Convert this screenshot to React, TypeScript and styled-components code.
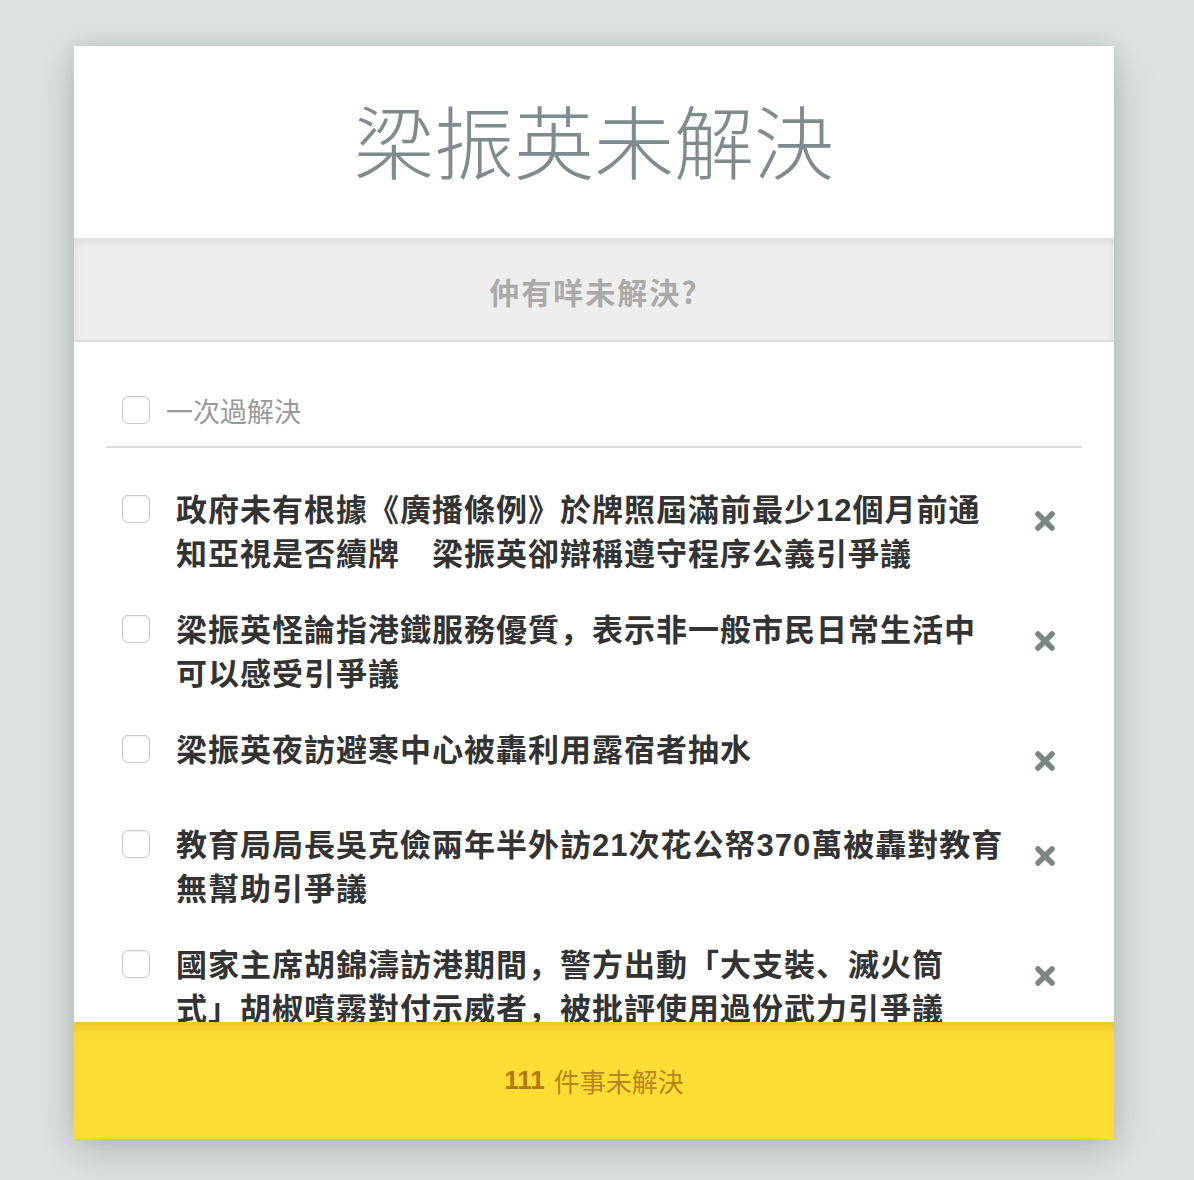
import { useState } from 'react'
import styled, { createGlobalStyle } from 'styled-components'

// 梁振英未解決 - a todo list of unresolved things, with a count in the yellow footer

const GlobalStyle = createGlobalStyle`
  html, body {
    margin: 0;
    padding: 0;
    background: #dee2e3;
    font-family: "Liberation Sans", "Noto Sans CJK SC", "Noto Sans CJK TC", sans-serif;
  }
`;

const Page = styled.div`
  padding: 46px 6px 0 0;
  height: 1180px;
  box-sizing: border-box;
`;

const Card = styled.section`
  width: 1040px;
  height: 1093px;
  margin: 0 auto;
  background: #fff;
  display: flex;
  flex-direction: column;
  box-shadow: 0 12px 40px rgba(0, 0, 0, 0.18), 0 0 18px rgba(0, 0, 0, 0.08);
  overflow: hidden;
`;

const Header = styled.header`
  height: 192px;
  box-sizing: border-box;
  padding-bottom: 8px;
  display: flex;
  align-items: center;
  justify-content: center;
  flex-shrink: 0;
`;

const Title = styled.h1`
  margin: 0;
  font-family: "Noto Sans CJK SC", "Noto Sans CJK TC", sans-serif;
  font-size: 80px;
  font-weight: 300;
  color: #7f8c8d;
  line-height: 1;
`;

const NewTodo = styled.input`
  flex-shrink: 0;
  height: 98px;
  padding: 4px 0 0;
  border: none;
  border-bottom: 2px solid #dcdcdc;
  background: #eee;
  box-shadow: inset 0 12px 12px -10px rgba(0, 0, 0, 0.09), inset -10px 0 12px -10px rgba(0, 0, 0, 0.06),
    inset 10px 0 12px -10px rgba(0, 0, 0, 0.06);
  text-align: center;
  font-family: "Noto Sans CJK SC", "Noto Sans CJK TC", sans-serif;
  font-size: 30px;
  font-weight: 700;
  letter-spacing: 2px;
  color: #555;
  outline: none;
  box-sizing: content-box;

  &::placeholder {
    color: #aaa;
  }
`;

const List = styled.div`
  flex: 1;
  overflow: hidden;
  padding: 32px 32px 0;
`;

const ToggleRow = styled.label`
  height: 72px;
  display: flex;
  align-items: center;
  gap: 16px;
  padding: 0 16px;
  border-bottom: 2px solid #ddd;
  margin-bottom: 25px;
  font-size: 27px;
  color: #999;
`;

const Check = styled.input.attrs({ type: 'checkbox' })`
  appearance: none;
  margin: 0;
  flex-shrink: 0;
  width: 28px;
  height: 28px;
  border: 1px solid #c6c6c6;
  border-radius: 6px;
  background: #fff;
  box-shadow: inset 0 1px 2px rgba(0, 0, 0, 0.06);
  box-sizing: border-box;
  cursor: pointer;

  &:checked {
    background: #7f8c8d;
    border-color: #7f8c8d;
  }
`;

const Items = styled.ul`
  list-style: none;
  margin: 0;
  padding: 0;
`;

const Item = styled.li`
  display: flex;
  align-items: flex-start;
  padding: 16px 16px;
`;

const ItemCheck = styled(Check)`
  margin-top: 6px;
  margin-right: 26px;
`;

const ItemText = styled.span<{ $done: boolean }>`
  width: 829px;
  font-size: 31px;
  font-weight: 700;
  letter-spacing: 1px;
  line-height: 44px;
  text-spacing-trim: space-all;
  color: ${p => (p.$done ? '#bbb' : '#333')};
  text-decoration: ${p => (p.$done ? 'line-through' : 'none')};
`;

const Destroy = styled.button`
  margin-left: auto;
  width: 42px;
  height: 63px;
  flex-shrink: 0;
  border: none;
  background: none;
  padding: 0;
  display: flex;
  align-items: center;
  justify-content: center;
  cursor: pointer;
`;

const Footer = styled.footer`
  flex-shrink: 0;
  height: 117px;
  background: #fddc34;
  box-shadow: inset 0 14px 14px -10px rgba(190, 130, 0, 0.35);
  display: flex;
  align-items: center;
  justify-content: center;
  font-size: 26px;
  color: #b8861a;
`;

const Count = styled.strong`
  font-weight: 700;
  color: #b07a0e;
  margin-right: 9px;
`;

const Cross = () => (
  <svg width="22" height="22" viewBox="0 0 22 22">
    <path d="M4 4 L18 18 M18 4 L4 18" stroke="#7a8586" strokeWidth="5.5" strokeLinecap="round" />
  </svg>
);

const initial = [
  '政府未有根據《廣播條例》於牌照屆滿前最少12個月前通知亞視是否續牌　梁振英卻辯稱遵守程序公義引爭議',
  '梁振英怪論指港鐵服務優質，表示非一般市民日常生活中可以感受引爭議',
  '梁振英夜訪避寒中心被轟利用露宿者抽水',
  '教育局局長吳克儉兩年半外訪21次花公帑370萬被轟對教育無幫助引爭議',
  '國家主席胡錦濤訪港期間，警方出動「大支裝、滅火筒式」胡椒噴霧對付示威者，被批評使用過份武力引爭議',
  '特首選舉期間，梁振英被揭發僭建，其後承認誤導公眾引爭議',
];

const App: React.FC = () => {
  const [todos, setTodos] = useState(initial.map((text, i) => ({ id: i, text, done: false })));

  const remaining = 111 - todos.filter(t => t.done).length;

  return (
    <Page>
      <GlobalStyle />
      <Card>
        <Header>
          <Title>梁振英未解決</Title>
        </Header>
        <NewTodo placeholder="仲有咩未解決?" />
        <List>
          <ToggleRow>
            <Check
              checked={todos.every(t => t.done)}
              onChange={e => setTodos(todos.map(t => ({ ...t, done: e.target.checked })))}
            />
            一次過解決
          </ToggleRow>
          <Items>
            {todos.map(todo => (
              <Item key={todo.id}>
                <ItemCheck
                  checked={todo.done}
                  onChange={() => setTodos(todos.map(t => (t.id === todo.id ? { ...t, done: !t.done } : t)))}
                />
                <ItemText $done={todo.done}>{todo.text}</ItemText>
                <Destroy onClick={() => setTodos(todos.filter(t => t.id !== todo.id))}>
                  <Cross />
                </Destroy>
              </Item>
            ))}
          </Items>
        </List>
        <Footer>
          <Count>{remaining}</Count>件事未解決
        </Footer>
      </Card>
    </Page>
  )
}

export default App
